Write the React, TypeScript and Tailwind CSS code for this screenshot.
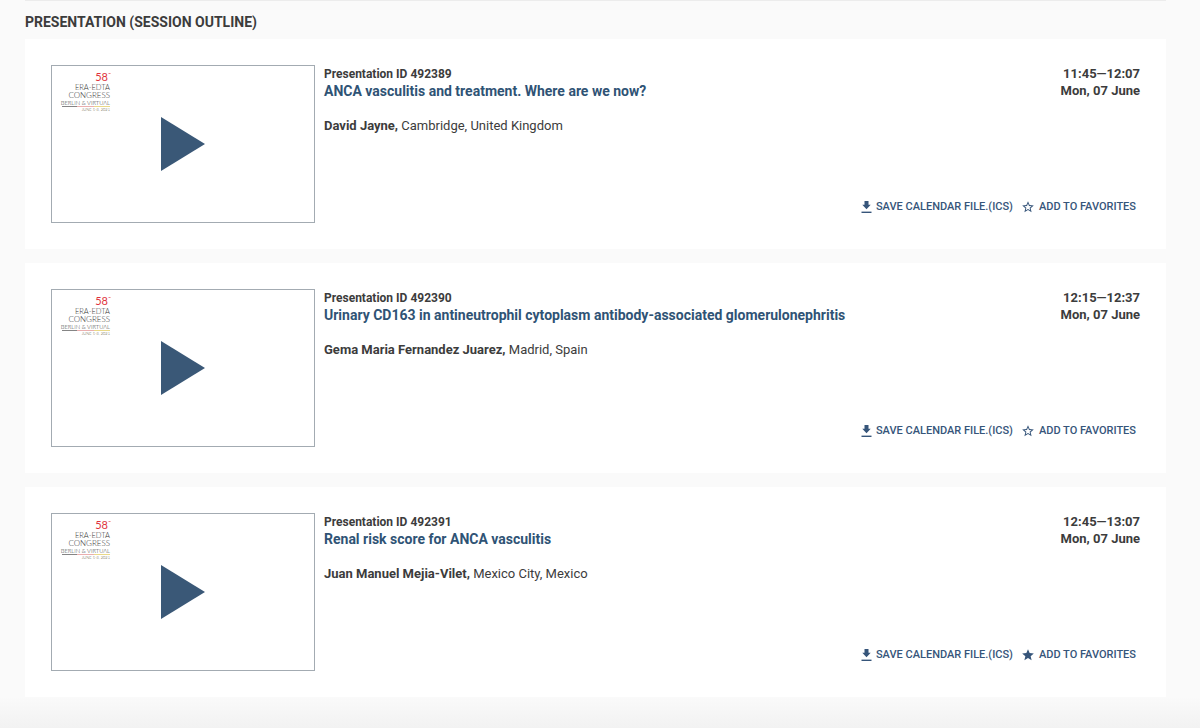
import { MdStar, MdStarBorder } from "react-icons/md";

interface Presentation {
  id: string;
  title: string;
  speaker: string;
  location: string;
  time: string;
  date: string;
  favorite: boolean;
}

const PRESENTATIONS: Presentation[] = [
  {
    id: "492389",
    title: "ANCA vasculitis and treatment. Where are we now?",
    speaker: "David Jayne",
    location: "Cambridge, United Kingdom",
    time: "11:45—12:07",
    date: "Mon, 07 June",
    favorite: false,
  },
  {
    id: "492390",
    title: "Urinary CD163 in antineutrophil cytoplasm antibody-associated glomerulonephritis",
    speaker: "Gema Maria Fernandez Juarez",
    location: "Madrid, Spain",
    time: "12:15—12:37",
    date: "Mon, 07 June",
    favorite: false,
  },
  {
    id: "492391",
    title: "Renal risk score for ANCA vasculitis",
    speaker: "Juan Manuel Mejia-Vilet",
    location: "Mexico City, Mexico",
    time: "12:45—13:07",
    date: "Mon, 07 June",
    favorite: true,
  },
];

function CongressLogo() {
  return (
    <svg
      viewBox="0 -4 52 46"
      className="absolute top-0.5 left-2 h-[46px] w-[52px] font-['Lato',sans-serif] font-light"
      textAnchor="end"
      aria-hidden="true"
    >
      <text x="48" y="9" fontSize="11" fontWeight="400" fill="#e0343c">
        58
      </text>
      <path d="M48.5 1.5h2" stroke="#e0343c" strokeWidth="0.6" />
      <text x="50" y="18" fontSize="7.5" fill="#333333">
        ERA-EDTA
      </text>
      <text x="50" y="26" fontSize="8" fill="#333333">
        CONGRESS
      </text>
      <text x="50" y="33" fontSize="5.8" fill="#333333">
        BERLIN &amp; VIRTUAL
      </text>
      <path d="M2 34.5h15" stroke="#666666" strokeWidth="0.8" />
      <path d="M17 34.5h17" stroke="#e59a9a" strokeWidth="0.8" />
      <path d="M34 34.5h16" stroke="#e3cf6a" strokeWidth="0.8" />
      <text x="50" y="39" fontSize="4" fill="#5d5638">
        JUNE 5-8, 2021
      </text>
    </svg>
  );
}

function DownloadIcon() {
  return (
    <svg viewBox="0 0 11 13" className="h-[13px] w-[11px] fill-current" aria-hidden="true">
      <path d="M3.5 0H7.5V3.8H9.7L5.5 8.2L1.3 3.8H3.5Z" />
      <path d="M0.5 10.6H10.5V12H0.5Z" />
    </svg>
  );
}

function PresentationCard({ item }: { item: Presentation }) {
  const Star = item.favorite ? MdStar : MdStarBorder;

  return (
    <article className="flex gap-2 bg-white p-[26px]">
      <button
        className="relative flex h-[158px] w-[264px] shrink-0 items-center justify-center border border-[#a3abb2]"
        aria-label={`Play ${item.title}`}
      >
        <CongressLogo />
        <svg viewBox="0 0 44 54" className="h-[54px] w-11 fill-[#3a5877]" aria-hidden="true">
          <path d="M0 0L44 27L0 54Z" />
        </svg>
      </button>

      <div className="flex min-w-0 flex-1 flex-col justify-between">
        <div className="flex justify-between gap-4">
          <div className="pt-px pl-px">
            <p className="text-[12px] leading-[17px] font-bold">Presentation ID {item.id}</p>
            <h3 className="text-[14px] leading-[17px] font-bold text-[#2f5375]">
              <a href={`#${item.id}`}>{item.title}</a>
            </h3>
            <p className="mt-4 text-[13px] leading-5">
              <b>{item.speaker},</b> {item.location}
            </p>
          </div>
          <div className="shrink-0 text-right text-[13px] leading-[17px] font-bold">
            <p>{item.time}</p>
            <p>{item.date}</p>
          </div>
        </div>

        <div className="flex justify-end gap-2 pr-1 pb-2 text-[11px] leading-4 font-medium text-[#36557a]">
          <button className="flex items-center gap-1">
            <DownloadIcon />
            SAVE CALENDAR FILE.(ICS)
          </button>
          <button className="flex items-center gap-1" aria-pressed={item.favorite}>
            <Star className="size-3.5" />
            ADD TO FAVORITES
          </button>
        </div>
      </div>
    </article>
  );
}

export default function App() {
  return (
    <main className="min-h-screen bg-[#fafafa] font-['Roboto',sans-serif] text-[#3c3c3c]">
      <div className="pr-[34px] pl-[25px]">
        <div className="h-px bg-[#ececec]" />
        <h2 className="pt-3 pb-2 text-[14px] leading-[18px] font-bold">
          PRESENTATION (SESSION OUTLINE)
        </h2>
        <div className="flex flex-col gap-3.5">
          {PRESENTATIONS.map((item) => (
            <PresentationCard key={item.id} item={item} />
          ))}
        </div>
      </div>
      <div className="h-[31px] bg-linear-to-b from-[#fafafa] to-[#f2f2f2]" />
    </main>
  );
}
